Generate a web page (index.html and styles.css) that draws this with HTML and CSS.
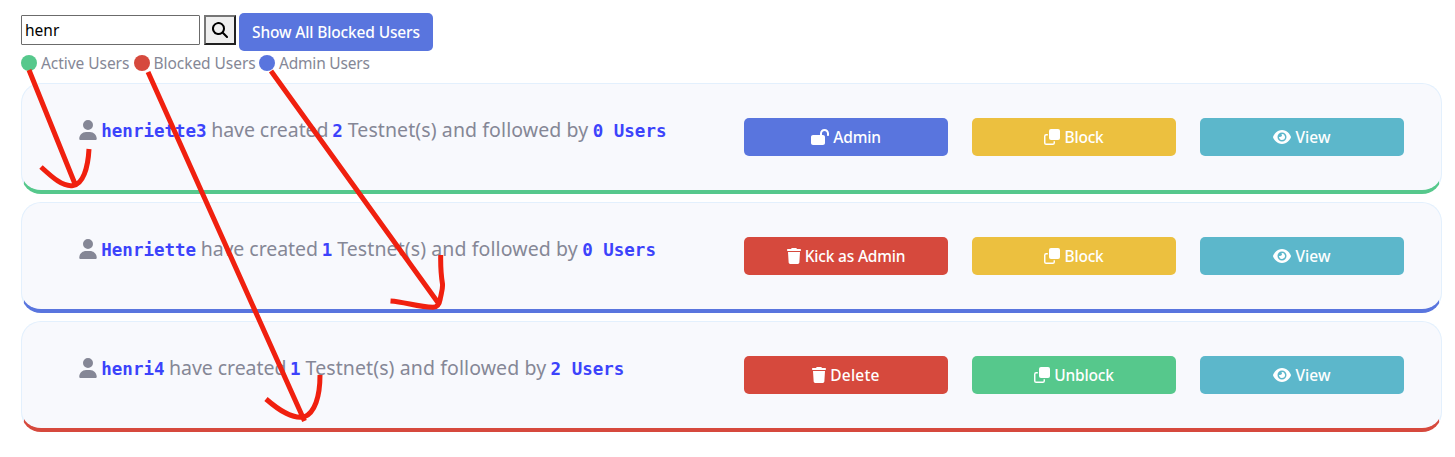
FILE: index.html
```html
<!DOCTYPE html>
<html lang="en">
<head>
<meta charset="utf-8">
<title>Users</title>
<link rel="stylesheet" href="styles.css">
</head>
<body>
<svg class="sprite" aria-hidden="true">
  <symbol id="user" viewBox="0 0 448 512"><path d="M224 256a128 128 0 1 0 0-256 128 128 0 1 0 0 256zm50 48H174C78 304 0 382 0 478c0 19 15 34 34 34h380c19 0 34-15 34-34 0-96-78-174-174-174z"/></symbol>
  <symbol id="search" viewBox="0 0 512 512"><path fill-rule="evenodd" d="M416 208c0 46-15 88-40 123l127 126c12 13 12 33 0 46s-33 12-46 0L331 376A208 208 0 1 1 416 208zM208 352a144 144 0 1 0 0-288 144 144 0 1 0 0 288z"/></symbol>
  <symbol id="lock-open" viewBox="0 0 576 512"><path d="M352 144c0-44 36-80 80-80s80 36 80 80v48c0 18 14 32 32 32s32-14 32-32v-48C576 64 512 0 432 0S288 64 288 144v48H64c-35 0-64 29-64 64v192c0 35 29 64 64 64h320c35 0 64-29 64-64V256c0-35-29-64-64-64h-32z"/></symbol>
  <symbol id="clone" viewBox="0 0 512 512"><path d="M224 0h224a64 64 0 0 1 64 64v224a64 64 0 0 1-64 64H224a64 64 0 0 1-64-64V64a64 64 0 0 1 64-64z"/><path d="M122 184H68a44 44 0 0 0-44 44v216a44 44 0 0 0 44 44h216a44 44 0 0 0 44-44v-54" fill="none" stroke="currentColor" stroke-width="46"/></symbol>
  <symbol id="trash" viewBox="0 0 448 512"><path d="M135 18C141 7 152 0 164 0h120c12 0 23 7 29 18l7 14h96c18 0 32 14 32 32s-14 32-32 32H32C14 96 0 82 0 64s14-32 32-32h96zM32 128h384l-21 339c-2 25-23 45-48 45H101c-25 0-46-20-48-45z"/></symbol>
  <symbol id="eye" viewBox="0 0 576 512"><path fill-rule="evenodd" d="M288 32c-81 0-146 37-193 80C49 156 18 208 3 244c-3 8-3 16 0 24 15 36 46 88 92 132 47 43 112 80 193 80s146-37 193-80c46-44 77-96 92-132 3-8 3-16 0-24-15-36-46-88-92-132-47-43-112-80-193-80zM144 256a144 144 0 1 1 288 0 144 144 0 1 1-288 0zm144-64c0 35-29 64-64 64-7 0-14-1-20-3-6-2-12 2-12 8 0 6 1 12 3 19a96 96 0 1 0 68-118c7 10 25 24 25 30z"/></symbol>
</svg>
<main class="page">
  <form class="toolbar">
    <input class="search-input" type="text" value="henr">
    <button class="search-btn" type="button"><svg class="search-icon"><use href="#search"/></svg></button>
    <button class="btn blue show-all" type="button">Show All Blocked Users</button>
  </form>
  <div class="legend">
    <span class="dot green"></span><span class="l-active">Active Users</span>
    <span class="dot red"></span><span class="l-blocked">Blocked Users</span>
    <span class="dot blue"></span><span class="l-admin">Admin Users</span>
  </div>
  <section class="cards">
    <article class="card active">
      <p class="summary"><svg class="user-icon"><use href="#user"/></svg><b>henriette3</b><span class="created">have created</span><b>2</b><span class="followed">Testnet(s) and followed by</span><b>0 Users</b></p>
      <button class="btn blue"><svg class="wide"><use href="#lock-open"/></svg><span>Admin</span></button>
      <button class="btn yellow"><svg class="square"><use href="#clone"/></svg><span>Block</span></button>
      <button class="btn cyan"><svg class="wide"><use href="#eye"/></svg><span>View</span></button>
    </article>
    <article class="card admin">
      <p class="summary"><svg class="user-icon"><use href="#user"/></svg><b>Henriette</b><span class="created">have created</span><b>1</b><span class="followed">Testnet(s) and followed by</span><b>0 Users</b></p>
      <button class="btn red"><svg class="narrow"><use href="#trash"/></svg><span>Kick as Admin</span></button>
      <button class="btn yellow"><svg class="square"><use href="#clone"/></svg><span>Block</span></button>
      <button class="btn cyan"><svg class="wide"><use href="#eye"/></svg><span>View</span></button>
    </article>
    <article class="card blocked">
      <p class="summary"><svg class="user-icon"><use href="#user"/></svg><b>henri4</b><span class="created">have created</span><b>1</b><span class="followed">Testnet(s) and followed by</span><b>2 Users</b></p>
      <button class="btn red"><svg class="narrow"><use href="#trash"/></svg><span class="delete">Delete</span></button>
      <button class="btn green"><svg class="square"><use href="#clone"/></svg><span>Unblock</span></button>
      <button class="btn cyan"><svg class="wide"><use href="#eye"/></svg><span>View</span></button>
    </article>
  </section>
</main>
<svg class="arrows" viewBox="0 0 1455 457" aria-hidden="true">
  <path d="M29 70L75 184M41 167C53 178 63 187 73 185.500C83 184 88 168 89 149"/>
  <path d="M148 72L304.500 421M266 399C281 412 293 419 304 417C315 413 320 396 320 375"/>
  <path d="M271 71L439 304M390.500 301C405 302 418 307 433 307.300Q439 307 440 300C441 294 443 289 442.500 284C441 275 440.500 266 440.700 255"/>
</svg>
</body>
</html>
```
FILE: styles.css
```css
* { box-sizing: border-box; }
body {
  margin: 0;
  background: #fff;
  color: #858796;
  font: 16px/24px "Noto Sans", "Open Sans", sans-serif;
}
svg { display: block; fill: currentColor; }
.sprite { position: absolute; width: 0; height: 0; }
.page { height: 457px; overflow: hidden; padding: 13px 13px 0 21px; }
.toolbar { display: flex; align-items: flex-start; height: 38px; }
.search-input {
  width: 179px;
  height: 30px;
  margin: 2px 4px 0 0;
  padding: 1px 3px;
  border: 1px solid #6b6b6b;
  border-radius: 1px;
  color: #000;
  font: 15.5px "Noto Sans", sans-serif;
}
.search-btn {
  display: grid;
  place-items: center;
  width: 32px;
  height: 30px;
  margin: 2px 3px 0 0;
  padding: 0;
  border: 2px solid;
  border-color: #767676 #212121 #212121 #767676;
  background: #efefef;
  color: #000;
}
.search-icon { width: 16px; height: 16px; }
.btn {
  display: flex;
  align-items: center;
  justify-content: center;
  gap: 4px;
  height: 38px;
  padding: 0;
  border: 0;
  border-radius: 5px;
  color: #fff;
  font: 500 15.5px/24px "Noto Sans", sans-serif;
  letter-spacing: -0.2px;
  white-space: nowrap;
}
.show-all { width: 194px; letter-spacing: -0.15px; }
.delete { letter-spacing: 0.2px; }
.blue { background: #5975de; }
.red { background: #d6493d; }
.green { background: #56c88c; }
.yellow { background: #ecc03f; }
.cyan { background: #5cb7cb; }
.cyan span { letter-spacing: 0.1px; }
.wide { width: 18px; height: 16px; }
.square { width: 16px; height: 16px; }
.narrow { width: 14px; height: 16px; }
.legend {
  display: flex;
  align-items: center;
  height: 24px;
  font-size: 15.5px;
  letter-spacing: -0.05px;
  white-space: nowrap;
}
.dot { width: 16px; height: 16px; margin-right: 4px; border-radius: 50%; }
.l-active { width: 92.500px; }
.l-blocked { width: 105.500px; }
.l-admin { letter-spacing: -0.2px; }
.cards { display: grid; gap: 8px; margin-top: 8px; }
.card {
  display: grid;
  grid-template-columns: 1fr 204px 204px 204px;
  column-gap: 24px;
  align-items: start;
  height: 111px;
  padding: 34px 37px 0 57px;
  border: 1px solid #e3f0fd;
  border-bottom-width: 4px;
  border-radius: 20px;
  background: #f8f9fd;
}
.active { border-bottom-color: #56c88c; }
.admin { border-bottom-color: #5975de; }
.blocked { border-bottom-color: #d6493d; }
.summary {
  display: flex;
  align-items: baseline;
  margin: 0;
  font-size: 19.5px;
  line-height: 24px;
  white-space: pre;
}
.summary b {
  color: #3c43fb;
  font: bold 17.5px/24px "DejaVu Sans Mono", monospace;
}
.user-icon { width: 18px; height: 20px; margin: 1.500px 4.300px 0 0; align-self: flex-start; }
.created { width: 116px; margin: 0 5px 0 4.500px; letter-spacing: -0.05px; }
.followed { width: 240px; margin: 0 5px; letter-spacing: 0.1px; }
.arrows {
  position: absolute;
  inset: 0;
  width: 1455px;
  height: 457px;
  fill: none;
  stroke: #f0200f;
  stroke-width: 5;
  pointer-events: none;
}
```
